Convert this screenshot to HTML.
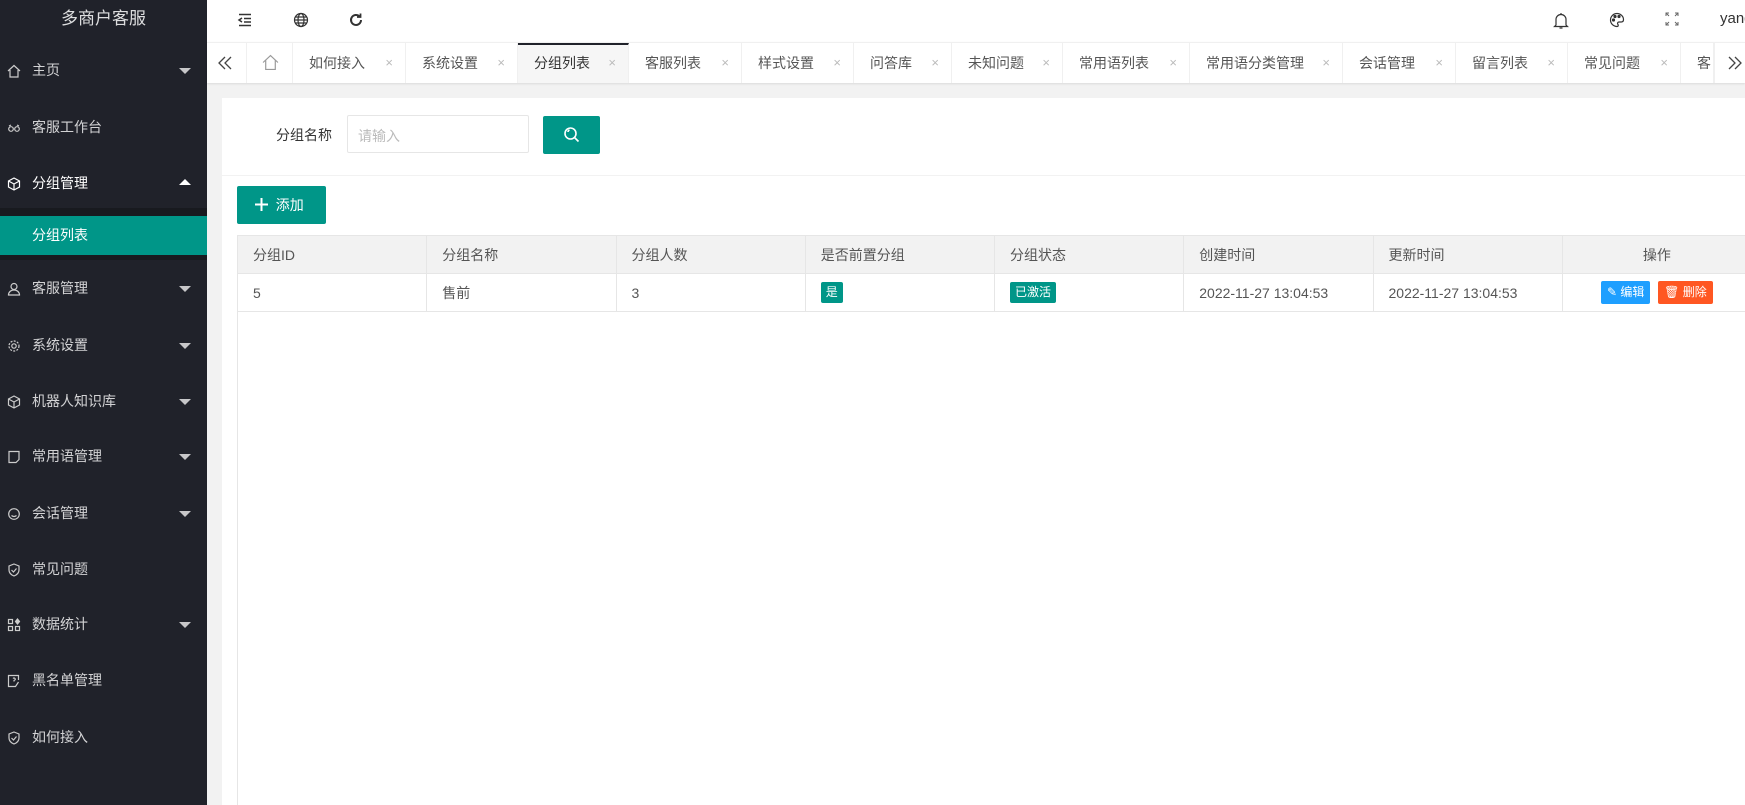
<!DOCTYPE html>
<html><head><meta charset="utf-8">
<style>
*{margin:0;padding:0;box-sizing:border-box}
body{width:1745px;height:805px;overflow:hidden;background:#f2f2f2;font-family:"Liberation Sans","Noto Sans CJK SC",sans-serif;font-size:14px;color:#333;position:relative}
.side{position:absolute;left:0;top:0;width:207px;height:805px;background:#20222a;color:#fff}
.logo{position:absolute;top:0;left:0;width:207px;height:42px;line-height:38px;text-align:center;font-size:17px;color:rgba(255,255,255,.85)}
.mi{position:absolute;left:0;width:207px;height:40px;line-height:40px;padding-left:32px;font-size:14px;color:rgba(255,255,255,.8)}
.mi svg{position:absolute;left:7px;top:14px}
.mi .ar{position:absolute;right:16px;top:18px;width:0;height:0;border-left:6px solid transparent;border-right:6px solid transparent;border-top:6px solid rgba(255,255,255,.75)}
.mi .up{border-top:none;border-bottom:6px solid #fff;top:16px}
.sub{position:absolute;left:0;top:208px;width:207px;height:52px;background:#181a1f}
.act{position:absolute;left:0;top:216px;width:207px;height:39px;background:#009688;color:#fff;line-height:39px;padding-left:32px}
.hdr{position:absolute;left:207px;top:0;right:0;height:42px;background:#fff}
.hdr svg{position:absolute;top:12px}
.tabs{position:absolute;left:207px;top:42px;right:0;height:41px;background:#fff;border-top:1px solid #f0f0f0;box-shadow:0 1px 2px rgba(0,0,0,.1)}
.tab{position:absolute;top:0;height:40px;line-height:40px;border-right:1px solid #f0f0f0;color:#555;font-size:14px;padding-left:16px}
.tab .x{position:absolute;right:12px;top:0;color:#bbb;font-size:13px}
.card{position:absolute;left:222px;top:98px;right:0;bottom:0;background:#fff}
table{border-collapse:collapse;position:absolute;left:237px;top:235px;table-layout:fixed;width:1515px}
td,th{border:1px solid #e6e6e6;height:38px;padding-left:15px;text-align:left;font-weight:normal;color:#555;font-size:14px}
th{background:#f2f2f2}
.badge{display:inline-block;background:#009688;color:#fff;font-size:12px;padding:0 5px;height:21px;line-height:21px;border-radius:2px}
.btn{display:inline-block;color:#fff;font-size:12px;height:23px;line-height:23px;padding:0 6px;border-radius:2px}
</style></head><body>
<div class="side">
<div class="logo">多商户客服</div>
<div class="mi" style="top:50px"><svg width="14" height="14" viewBox="0 0 14 14" fill="none" stroke="#ccc" stroke-width="1.2"><path d="M1 7L7 1.5 13 7M3 6v7h8V6"/></svg>主页<span class="ar"></span></div>
<div class="mi" style="top:107px"><svg width="14" height="14" viewBox="0 0 14 14" fill="none" stroke="#ccc" stroke-width="1.2"><circle cx="4" cy="8" r="2.3"/><circle cx="10" cy="8" r="2.3"/><path d="M2 5l2-1M12 5l-2-1"/></svg>客服工作台</div>
<div class="mi" style="top:163px;color:#fff"><svg width="14" height="14" viewBox="0 0 14 14" fill="none" stroke="#fff" stroke-width="1.2"><path d="M7 1l5.5 3v6L7 13 1.5 10V4zM1.5 4L7 7l5.5-3M7 7v6"/></svg>分组管理<span class="ar up"></span></div>
<div class="sub"></div>
<div class="act">分组列表</div>
<div class="mi" style="top:268px"><svg width="14" height="14" viewBox="0 0 14 14" fill="none" stroke="#ccc" stroke-width="1.2"><circle cx="7" cy="4.5" r="3"/><path d="M1.5 13c0-3 2.5-5 5.5-5s5.5 2 5.5 5z"/></svg>客服管理<span class="ar"></span></div>
<div class="mi" style="top:325px"><svg width="14" height="14" viewBox="0 0 14 14" fill="none" stroke="#ccc" stroke-width="1.2"><circle cx="7" cy="7" r="2.2"/><circle cx="7" cy="7" r="5" stroke-dasharray="2 1.3"/></svg>系统设置<span class="ar"></span></div>
<div class="mi" style="top:381px"><svg width="14" height="14" viewBox="0 0 14 14" fill="none" stroke="#ccc" stroke-width="1.2"><path d="M7 1l5.5 3v6L7 13 1.5 10V4zM1.5 4L7 7l5.5-3M7 7v6"/></svg>机器人知识库<span class="ar"></span></div>
<div class="mi" style="top:436px"><svg width="14" height="14" viewBox="0 0 14 14" fill="none" stroke="#ccc" stroke-width="1.2"><path d="M2 1.5h10v8l-3 3H2z"/></svg>常用语管理<span class="ar"></span></div>
<div class="mi" style="top:493px"><svg width="14" height="14" viewBox="0 0 14 14" fill="none" stroke="#ccc" stroke-width="1.2"><circle cx="7" cy="7" r="5.3"/><path d="M4.5 8.5q2.5 2 5 0"/></svg>会话管理<span class="ar"></span></div>
<div class="mi" style="top:549px"><svg width="14" height="14" viewBox="0 0 14 14" fill="none" stroke="#ccc" stroke-width="1.2"><path d="M7 1l5 2v4c0 3-2.5 5-5 6-2.5-1-5-3-5-6V3zM4.5 7l2 2 3-3.5"/></svg>常见问题</div>
<div class="mi" style="top:604px"><svg width="14" height="14" viewBox="0 0 14 14" fill="none" stroke="#ccc" stroke-width="1.2"><rect x="1.5" y="1.5" width="4" height="4"/><rect x="1.5" y="8.5" width="4" height="4"/><rect x="8.5" y="8.5" width="4" height="4"/><path d="M10.5 1l2 2.5-2 2.5-2-2.5z" fill="#ccc"/></svg>数据统计<span class="ar"></span></div>
<div class="mi" style="top:660px"><svg width="14" height="14" viewBox="0 0 14 14" fill="none" stroke="#ccc" stroke-width="1.2"><path d="M9 12.5H1.5v-11h10V6M6 4.5q1-1 2 0t-1 2v1M11.5 8l-3 4.5"/></svg>黑名单管理</div>
<div class="mi" style="top:717px"><svg width="14" height="14" viewBox="0 0 14 14" fill="none" stroke="#ccc" stroke-width="1.2"><path d="M7 1l5 2v4c0 3-2.5 5-5 6-2.5-1-5-3-5-6V3zM4.5 7l2 2 3-3.5"/></svg>如何接入</div>
</div>
<div class="hdr">
<svg style="left:30px" width="16" height="16" viewBox="0 0 16 16" fill="none" stroke="#333" stroke-width="1.5"><path d="M2 2.5h12M7 6.5h7M7 10h7M2 13.5h12M5 6l-3 2 3 2"/></svg>
<svg style="left:86px" width="16" height="16" viewBox="0 0 16 16" fill="none" stroke="#333" stroke-width="1.2"><circle cx="8" cy="8" r="6.5"/><ellipse cx="8" cy="8" rx="3" ry="6.5"/><path d="M1.5 8h13M2.5 5h11M2.5 11h11"/></svg>
<svg style="left:141px" width="16" height="16" viewBox="0 0 16 16" fill="none" stroke="#333" stroke-width="2"><path d="M13 8a5 5 0 1 1-1.5-3.6"/><path d="M12.5 1.5v3.5H9" stroke-width="1.8"/></svg>
<svg style="left:1346px" width="16" height="18" viewBox="0 0 16 18" fill="none" stroke="#333" stroke-width="1.2"><path d="M3 13V7.5a5 5 0 0 1 10 0V13l1.5 1.5h-13zM6.5 16h3M8 1v1"/></svg>
<svg style="left:1402px" width="16" height="16" viewBox="0 0 16 16" fill="none" stroke="#333" stroke-width="1.2"><path d="M8 1.5a6.5 6.5 0 1 0 0 13c1.5 0 1.5-1.5.8-2.3-.7-.9 0-2.2 1.2-2.2h2.2c1.5 0 2.3-1 2.3-2.5 0-3.3-3-6-6.5-6z"/><circle cx="4.5" cy="8" r="1" fill="#333"/><circle cx="6" cy="4.5" r="1" fill="#333"/><circle cx="10" cy="4.5" r="1" fill="#333"/></svg>
<svg style="left:1458px" width="14" height="14" viewBox="0 0 14 14" fill="none" stroke="#666" stroke-width="1"><path d="M1 4V1h3M10 1h3v3M13 10v3h-3M4 13H1v-3M1 1l3 3M13 1l-3 3M13 13l-3-3M1 13l3-3"/></svg>
<span style="position:absolute;left:1513px;top:10px;font-size:15px;color:#333">yang</span>
</div>
<div class="tabs">
<div class="tab" style="left:0;width:40px;padding-left:10px"><svg width="16" height="16" viewBox="0 0 16 16" fill="none" stroke="#444" stroke-width="1.3" style="margin-top:12px"><path d="M8 2L2 8l6 6M14 2L8 8l6 6"/></svg></div>
<div class="tab" style="left:40px;width:46px;padding-left:15px"><svg width="17" height="17" viewBox="0 0 16 16" fill="none" stroke="#999" stroke-width="1.1" style="margin-top:11px"><path d="M1 8L8 1.5 15 8M3.5 6v8.5h9V6"/></svg></div>
<div class="tab" style="left:86px;width:113px">如何接入<span class="x">×</span></div>
<div class="tab" style="left:199px;width:112px">系统设置<span class="x">×</span></div>
<div class="tab" style="left:311px;width:111px;background:#f6f6f6;border-top:2px solid #20222a;line-height:36px;color:#333">分组列表<span class="x" style="line-height:36px">×</span></div>
<div class="tab" style="left:422px;width:113px">客服列表<span class="x">×</span></div>
<div class="tab" style="left:535px;width:112px">样式设置<span class="x">×</span></div>
<div class="tab" style="left:647px;width:98px">问答库<span class="x">×</span></div>
<div class="tab" style="left:745px;width:111px">未知问题<span class="x">×</span></div>
<div class="tab" style="left:856px;width:127px">常用语列表<span class="x">×</span></div>
<div class="tab" style="left:983px;width:153px">常用语分类管理<span class="x">×</span></div>
<div class="tab" style="left:1136px;width:113px">会话管理<span class="x">×</span></div>
<div class="tab" style="left:1249px;width:112px">留言列表<span class="x">×</span></div>
<div class="tab" style="left:1361px;width:113px">常见问题<span class="x">×</span></div>
<div class="tab" style="left:1474px;width:33px;overflow:hidden">客</div>
<div class="tab" style="left:1507px;width:40px;padding-left:12px;background:#fff;border-left:1px solid #f0f0f0"><svg width="16" height="16" viewBox="0 0 16 16" fill="none" stroke="#444" stroke-width="1.3" style="margin-top:12px"><path d="M2 2l6 6-6 6M8 2l6 6-6 6"/></svg></div>
</div>
<div class="card"></div>
<div style="position:absolute;left:276px;top:125px;font-size:14px;color:#333">分组名称</div>
<div style="position:absolute;left:347px;top:115px;width:182px;height:38px;border:1px solid #e6e6e6;border-radius:2px;color:#bbb;padding:10px 10px;font-size:14px">请输入</div>
<div style="position:absolute;left:543px;top:116px;width:57px;height:38px;background:#009688;border-radius:2px"><svg style="position:absolute;left:20px;top:10px" width="18" height="18" viewBox="0 0 18 18" fill="none" stroke="#fff" stroke-width="1.6"><circle cx="7.5" cy="7.5" r="5.5"/><path d="M11.5 11.5l4 4M5 6q0-1.5 1.5-2"/></svg></div>
<div style="position:absolute;left:222px;top:175px;right:0;height:1px;background:#f2f2f2"></div>
<div style="position:absolute;left:237px;top:186px;width:89px;height:38px;background:#009688;border-radius:2px;color:#fff;line-height:38px;font-size:14px;padding-left:18px"><svg width="13" height="13" viewBox="0 0 13 13" stroke="#fff" stroke-width="2" style="vertical-align:-1px"><path d="M6.5 0v13M0 6.5h13"/></svg>&nbsp;&nbsp;添加</div>
<div style="position:absolute;left:237px;top:312px;width:1px;bottom:0;background:#e6e6e6"></div>
<table>
<tr><th>分组ID</th><th>分组名称</th><th>分组人数</th><th>是否前置分组</th><th>分组状态</th><th>创建时间</th><th>更新时间</th><th style="text-align:center;padding:0">操作</th></tr>
<tr><td>5</td><td>售前</td><td>3</td><td><span class="badge">是</span></td><td><span class="badge">已激活</span></td><td>2022-11-27 13:04:53</td><td>2022-11-27 13:04:53</td><td style="text-align:center;padding:0"><span class="btn" style="background:#1e9fff">✎ 编辑</span>&nbsp;&nbsp;<span class="btn" style="background:#ff5722">🗑︎ 删除</span></td></tr>
</table>
</body></html>
